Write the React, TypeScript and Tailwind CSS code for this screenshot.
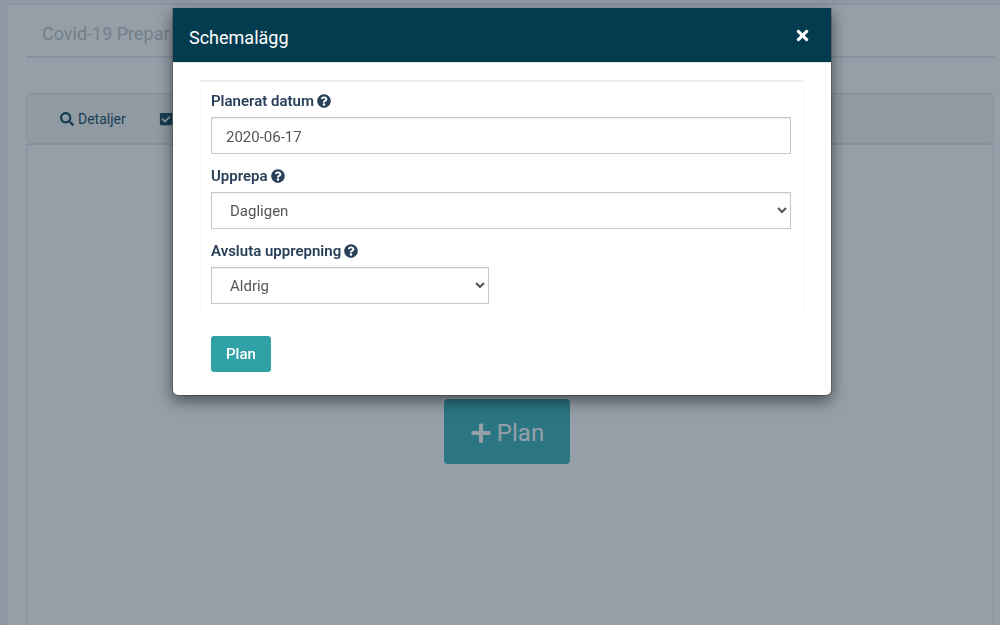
import type { ReactNode } from 'react';
import { FaCheckSquare, FaPlus, FaQuestionCircle, FaSearch, FaTimes } from 'react-icons/fa';

interface FieldProps {
  id: string;
  label: string;
  children: ReactNode;
}

const CONTROL =
  'block h-[37px] border border-[#c8c8c8] bg-white text-[15px] text-[#555] shadow-[inset_0_1px_1px_rgba(0,0,0,0.075)] outline-none';

function Field({ id, label, children }: FieldProps) {
  return (
    <div className="flex flex-col gap-[6px]">
      <label htmlFor={id} className="flex items-center gap-[3px] text-[15px] font-semibold leading-5 text-[#29405a]">
        {label}
        <FaQuestionCircle size={14} />
      </label>
      {children}
    </div>
  );
}

function ScheduleDialog() {
  return (
    <div
      role="dialog"
      aria-modal="true"
      aria-labelledby="schedule-title"
      className="w-full max-w-[660px] overflow-hidden rounded-b-md border border-t-0 border-black/20 bg-white bg-clip-padding shadow-[0_5px_15px_rgba(0,0,0,0.5)]"
    >
      <div className="flex items-center justify-between border-b border-[#e5e5e5] bg-[#033c4f] px-4 pb-[11px] pt-[17px] text-white">
        <h4 id="schedule-title" className="text-lg leading-[26px]">Schemalägg</h4>
        <button type="button" aria-label="Stäng" className="mb-[6px] mr-1">
          <FaTimes size={17} />
        </button>
      </div>

      <form className="px-[27px] pb-[23px] pt-[17px]" onSubmit={(e) => e.preventDefault()}>
        <div className="flex flex-col gap-3 border-x border-t-2 border-x-[#fafafa] border-t-[#ececec] pb-[9px] pl-[10px] pr-3 pt-[9px]">
          <Field id="date" label="Planerat datum">
            <input id="date" type="text" defaultValue="2020-06-17" className={`${CONTROL} w-full px-[14px] pt-[2px]`} />
          </Field>
          <Field id="repeat" label="Upprepa">
            <select id="repeat" className={`${CONTROL} w-full pl-[14px]`}>
              <option>Dagligen</option>
            </select>
          </Field>
          <Field id="end" label="Avsluta upprepning">
            <select id="end" className={`${CONTROL} w-[48%] pl-[14px]`}>
              <option>Aldrig</option>
            </select>
          </Field>
        </div>
        <button
          type="submit"
          className="ml-[11px] mt-[23px] block h-9 rounded-[3px] bg-[#30a1a7] px-[15px] pt-px text-[15px] font-medium text-white"
        >
          Plan
        </button>
      </form>
    </div>
  );
}

export default function App() {
  return (
    <div className="relative h-screen overflow-hidden bg-[#f3f3f4] pl-[6px] pt-1 font-[Roboto,sans-serif]">
      <main className="flex h-full flex-col border-l border-t border-[#e0e6f2] bg-white pl-[19px] pr-[6px]">
        <h2 className="border-b-2 border-[#dae2f0] pb-[9px] pl-4 pt-4 text-lg leading-[26px] text-[#bcbec1]">
          Covid-19 Prepar
        </h2>
        <nav className="mt-[35px] flex h-[51px] items-center gap-[33px] rounded-[5px] border border-[#dfe2e6] bg-[#f5f5f5] px-[33px] text-sm text-[#033c4f]">
          <a href="#detaljer" className="flex items-center gap-1">
            <FaSearch size={14} />
            Detaljer
          </a>
          <a href="#uppgifter" aria-label="Uppgifter">
            <FaCheckSquare size={14} />
          </a>
        </nav>
        <section className="flex flex-1 items-start justify-center border-x border-t border-[#dae2f0] pr-[6px] pt-[254px]">
          <button
            type="button"
            className="flex h-[65px] items-center gap-[5px] rounded-[4px] bg-[#2dabb2] px-[26px] pt-[2px] text-2xl text-white"
          >
            <FaPlus size={22} />
            Plan
          </button>
        </section>
      </main>

      <div className="fixed inset-0 flex items-start justify-center bg-[#2b3f52]/50 pl-1 pt-2">
        <ScheduleDialog />
      </div>
    </div>
  );
}
